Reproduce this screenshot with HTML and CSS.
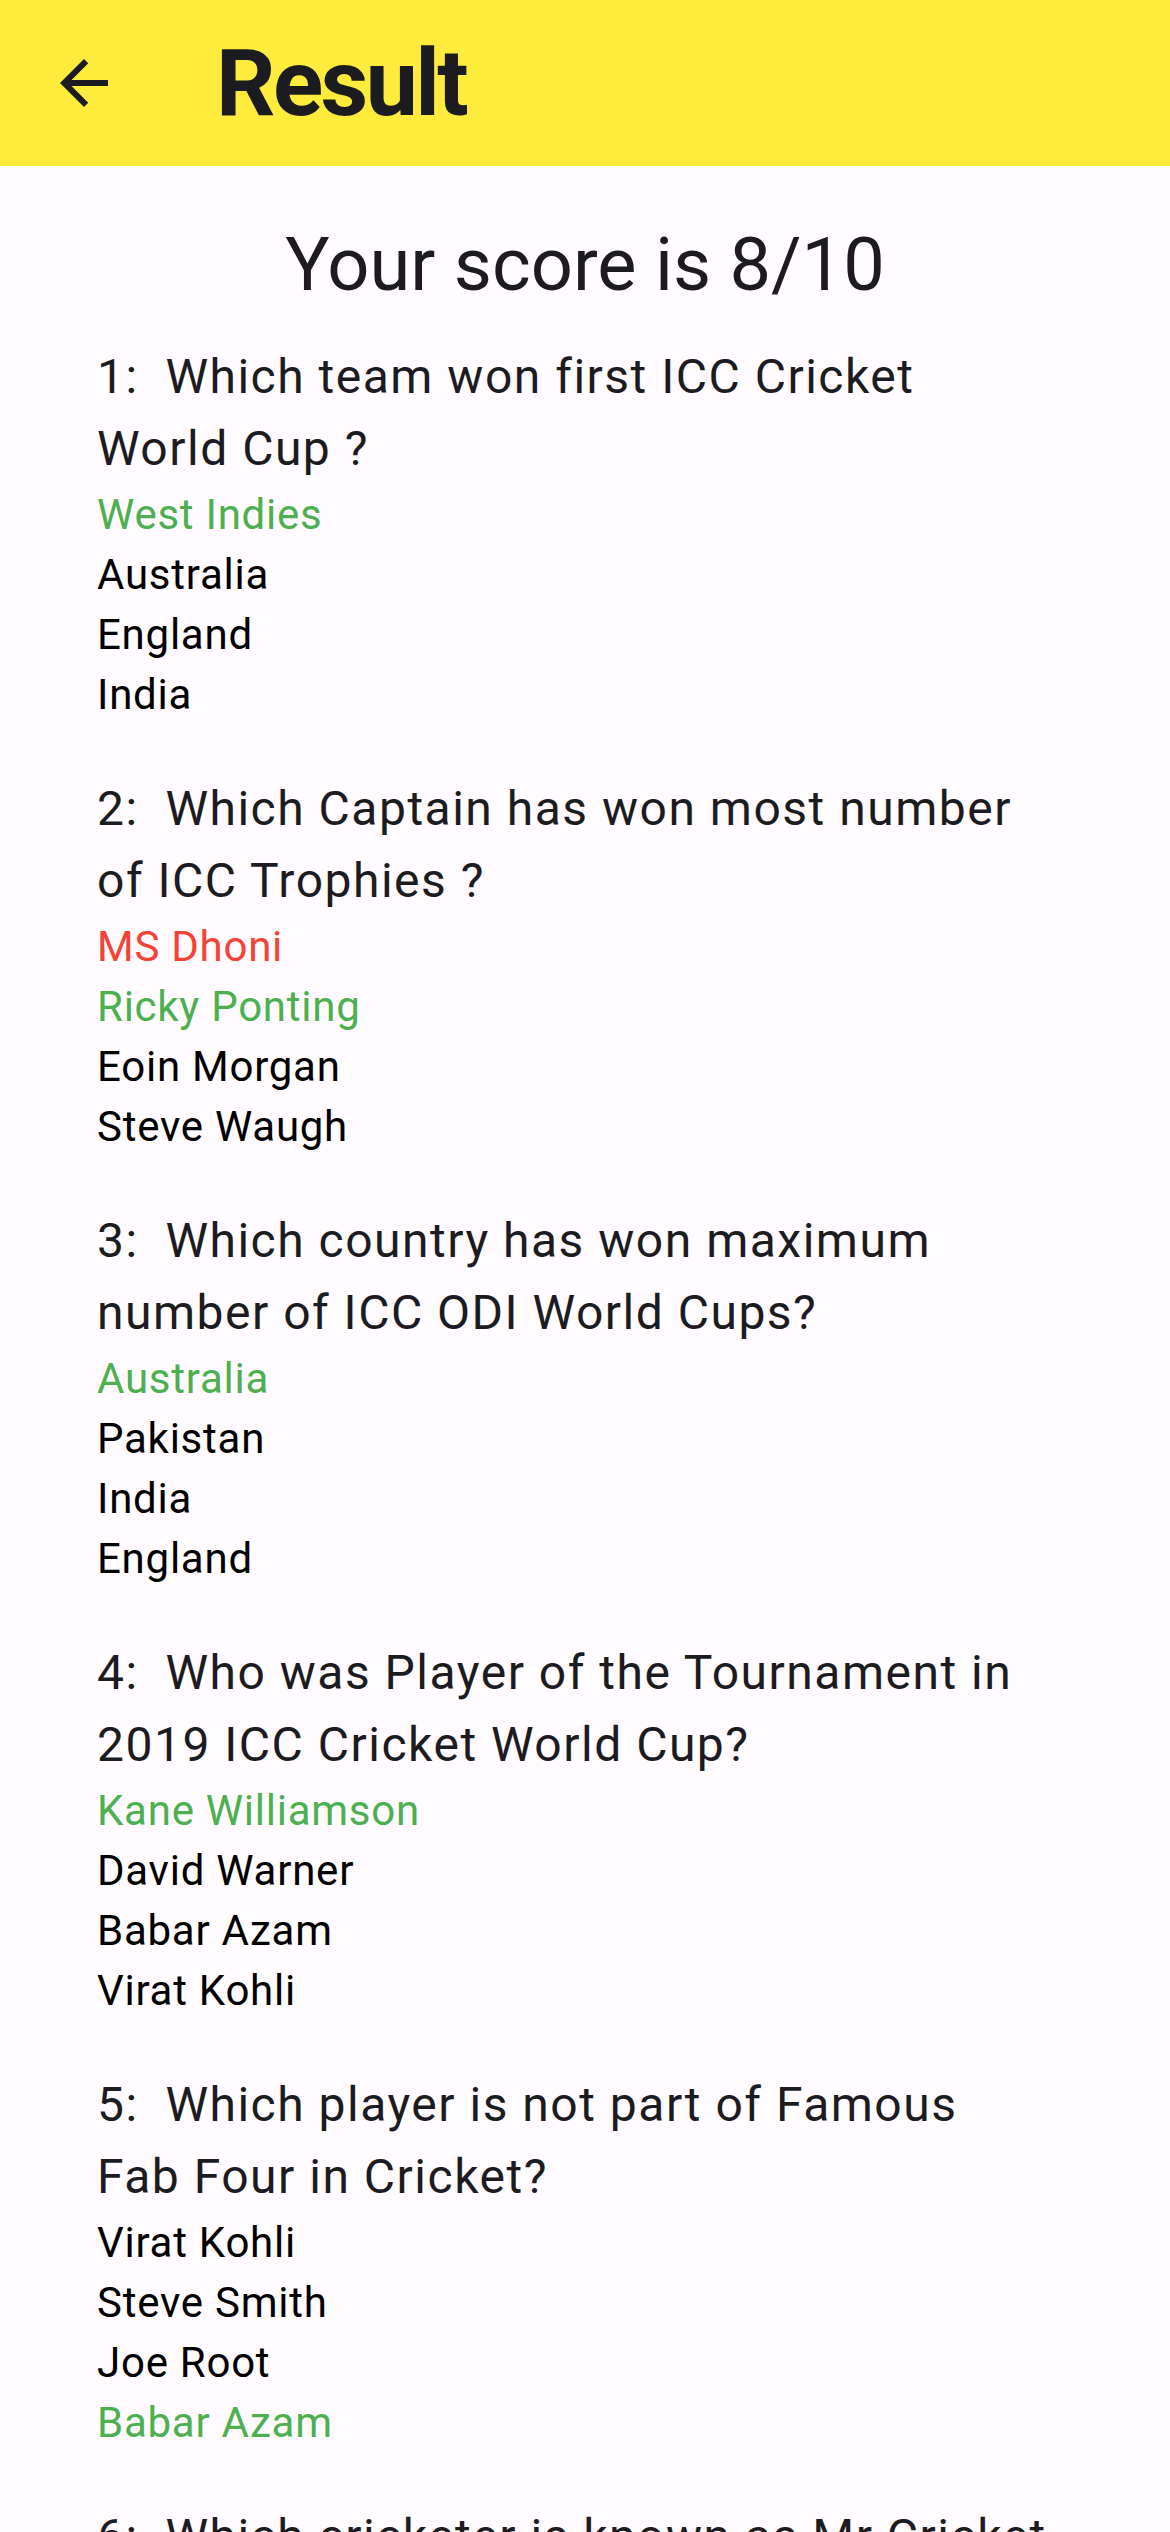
FILE: index.html
```html
<!DOCTYPE html>
<html lang="en">
<head>
<meta charset="utf-8">
<title>Result</title>
<link rel="stylesheet" href="styles.css">
</head>
<body>
<header class="appbar">
  <button class="back" aria-label="Back">
    <svg viewBox="0 0 24 24" width="72" height="72"><path d="M20 11H7.83l5.59-5.59L12 4l-8 8 8 8 1.41-1.41L7.83 13H20v-2z" fill="#1C1B1F"/></svg>
  </button>
  <h1 class="title">Result</h1>
</header>
<main class="content">
  <h2 class="score">Your score is 8/10</h2>
  <section class="question">
    <p class="qtext">1:&nbsp; Which team won first ICC Cricket<br>World Cup ?</p>
    <ul class="options">
      <li class="correct">West Indies</li>
      <li>Australia</li>
      <li>England</li>
      <li>India</li>
    </ul>
  </section>
  <section class="question">
    <p class="qtext">2:&nbsp; Which Captain has won most number<br>of ICC Trophies ?</p>
    <ul class="options">
      <li class="wrong">MS Dhoni</li>
      <li class="correct">Ricky Ponting</li>
      <li>Eoin Morgan</li>
      <li>Steve Waugh</li>
    </ul>
  </section>
  <section class="question">
    <p class="qtext">3:&nbsp; Which country has won maximum<br>number of ICC ODI World Cups?</p>
    <ul class="options">
      <li class="correct">Australia</li>
      <li>Pakistan</li>
      <li>India</li>
      <li>England</li>
    </ul>
  </section>
  <section class="question">
    <p class="qtext">4:&nbsp; Who was Player of the Tournament in<br>2019 ICC Cricket World Cup?</p>
    <ul class="options">
      <li class="correct">Kane Williamson</li>
      <li>David Warner</li>
      <li>Babar Azam</li>
      <li>Virat Kohli</li>
    </ul>
  </section>
  <section class="question">
    <p class="qtext">5:&nbsp; Which player is not part of Famous<br>Fab Four in Cricket?</p>
    <ul class="options">
      <li>Virat Kohli</li>
      <li>Steve Smith</li>
      <li>Joe Root</li>
      <li class="correct">Babar Azam</li>
    </ul>
  </section>
  <section class="question">
    <p class="qtext">6:&nbsp; Which cricketer is known as Mr Cricket<br>?</p>
    <ul class="options">
      <li class="correct">Michael Hussey</li>
      <li>Ricky Ponting</li>
      <li>Steve Smith</li>
      <li>Shane Warne</li>
    </ul>
  </section>
</main>
</body>
</html>
```
FILE: styles.css
```css
* { box-sizing: border-box; }
html, body {
  margin: 0;
  padding: 0;
  background: #FFFBFE;
  font-family: Roboto, "Noto Sans", sans-serif;
  color: #1C1B1F;
}
body { overflow: hidden; height: 2532px; }

.appbar {
  height: 166px;
  background: #FFEB3B;
  display: flex;
  align-items: center;
  padding-left: 48px;
}
.back {
  width: 72px;
  height: 72px;
  padding: 0;
  border: 0;
  background: transparent;
  display: flex;
  margin-right: 96px;
}
.back svg { display: block; }
.title {
  margin: 0;
  font-size: 93px;
  font-weight: 700;
  line-height: 1;
  letter-spacing: -2.6px;
}

.content {
  padding: 51px 96px 0 97px;
}
.score {
  margin: 0 -96px 28px -97px;
  text-align: center;
  font-size: 74px;
  font-weight: 400;
  line-height: 96px;
  letter-spacing: 0;
}
.question { margin-bottom: 48px; }
.qtext {
  margin: 0;
  font-size: 48px;
  line-height: 72px;
  letter-spacing: 1.5px;
  color: #1C1B1F;
}
.options {
  list-style: none;
  margin: 0;
  padding: 0;
}
.options li {
  font-size: 42px;
  line-height: 60px;
  letter-spacing: 0.75px;
  color: #000;
}
.options li.correct { color: #4CAF50; }
.options li.wrong { color: #F44336; }
```
